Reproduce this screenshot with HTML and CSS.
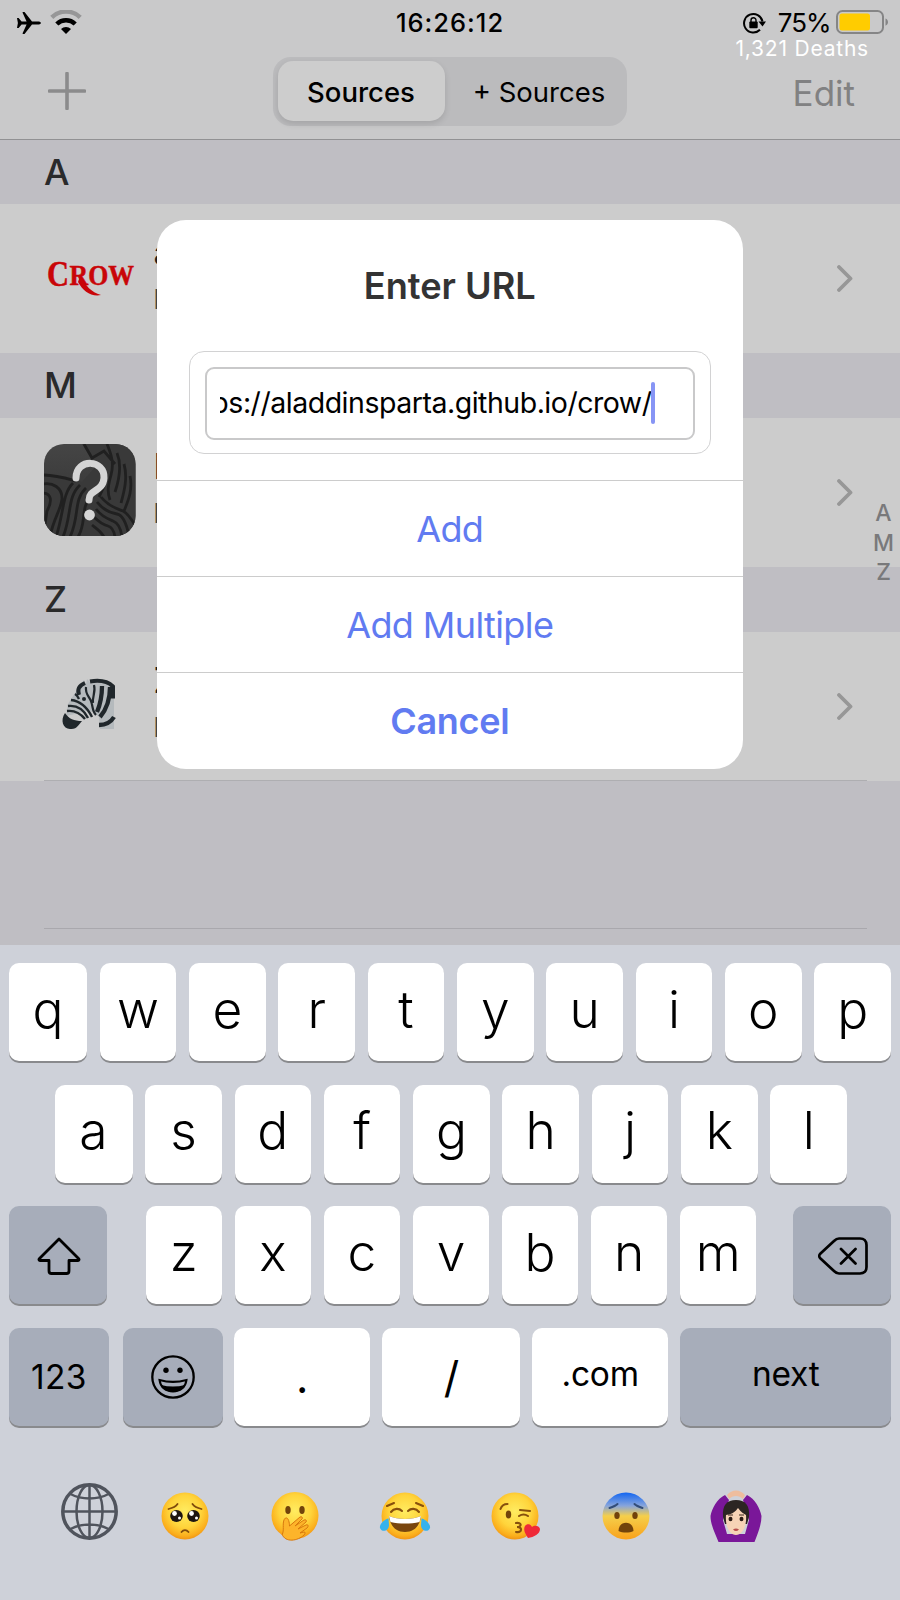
FILE: index.html
```html
<!DOCTYPE html>
<html lang="en">
<head>
<meta charset="utf-8">
<title>Sources</title>
<link rel="stylesheet" href="styles.css">
</head>
<body>
<div class="screen">
  <header class="top">
    <div class="status">
      <div class="status-left">
        <svg class="plane" viewBox="0 0 24 22"><path d="M0 6h1.6l3 3.600h5L5.600.8C5.400.2 5.800 0 6.200 0h1.300l7.500 9.500h6c1.500 0 3 .6 3 1.500s-1.500 1.500-3 1.500h-6L7.500 22H6.200c-.4 0-.8-.2-.6-.8l4-8.800h-5l-3 3.600H0l.9-5z"/></svg>
        <svg class="wifi" viewBox="0 0 32 24"><g fill="none"><path d="M1.800 7.300A20.500 20.500 0 0 1 30.200 7.300" stroke="#979798" stroke-width="4.500"/><path d="M6.800 14A13.300 13.300 0 0 1 25.200 14" stroke="#000" stroke-width="4.500"/></g><path d="M16 24l-5-5a7.200 7.200 0 0 1 10 0z"/></svg>
      </div>
      <div class="time">16:26:12</div>
      <div class="status-right">
        <svg class="rotation" viewBox="0 0 23 22"><path d="M17 17.800A9.300 9.300 0 1 1 19.500 9.500" fill="none" stroke="#000" stroke-width="2"/><path d="M15.500 9.500h7.500l-3.500 5z"/><rect x="6.300" y="9.500" width="8.400" height="6.800" rx="1"/><path d="M8 10V8.200a2.500 2.500 0 0 1 5 0V10" fill="none" stroke="#000" stroke-width="1.400"/></svg>
        <span class="percent">75%</span>
        <svg class="battery" viewBox="0 0 53 24"><rect x="1" y="1" width="46" height="22" rx="5.500" fill="none" stroke="#858586" stroke-width="2"/><rect x="3.500" y="3.500" width="30.500" height="17" rx="2.500" fill="#fc0"/><path d="M49.500 8.500c3.300 1.200 3.300 6 0 7.200z" fill="#858586"/></svg>
      </div>
    </div>
    <div class="overlay-note">1,321 Deaths</div>
    <nav class="navbar">
      <svg class="plus" viewBox="0 0 38 38"><path d="M19 1.500v35M1.500 19h35" stroke="#8b8b8c" stroke-width="3.600" stroke-linecap="round"/></svg>
      <div class="segments"><span class="segment active">Sources</span><span class="segment">+ Sources</span></div>
      <span class="edit">Edit</span>
    </nav>
  </header>

  <main class="list">
    <h2 class="section first">A</h2>
    <div class="row">
      <svg class="thumb" viewBox="0 0 92 92"><g fill="#c90508" stroke="#c90508" stroke-width=".5" font-family="'Liberation Serif',serif" font-weight="bold"><text x="3" y="56" font-size="35" textLength="22" lengthAdjust="spacingAndGlyphs">C</text><text x="25.500" y="55" font-size="29" textLength="64.500" lengthAdjust="spacingAndGlyphs">ROW</text></g><path d="M36 46c6 10 11 16 21 19-10 2-18-4-23-13z" fill="#c90508"/></svg>
      <div class="labels"><b>a</b><span>h</span></div>
      <svg class="chevron" viewBox="0 0 16 27"><path d="M2 2l11.500 11.500L2 25"/></svg>
    </div>
    <h2 class="section">M</h2>
    <div class="row">
      <svg class="thumb" viewBox="0 0 92 92">
        <defs><clipPath id="tile"><rect width="91.500" height="92" rx="20"/></clipPath><linearGradient id="shade" x2="0" y2="1"><stop stop-color="#454545"/><stop offset="1" stop-color="#303030"/></linearGradient></defs>
        <g clip-path="url(#tile)"><rect width="92" height="92" fill="url(#shade)"/>
        <path d="M0 30C16 31 27 35 38 38L52 22 38 0h54v92H0z" fill="#393939"/>
        <g fill="none" stroke="#202020" stroke-width="2.800"><path d="M-1 31c12 0 22 3 33 6M-1 40c10-2 19 4 19 14S9 75 6 93M-2 49c9 0 11 7 5 18L1 80M29 39C18 50 20 69 12 93M36 41C23 53 28 71 19 93M42 44C29 56 36 72 26 93M47 52C36 64 43 78 34 93M40 0l8 14 12-7 11 13M63 0c5 12 7 20 4 31s-4 17-1 25M73 9c5 12 2 27-2 39M80 20c4 14 0 28-3 39M86 32c3 14-2 25-6 35M59 27c6 7 0 18-4 26M53 58c7 9 14 11 20 12s10 12 12 22M52 65c6 8 12 10 17 12s8 8 9 16M50 73c6 6 10 8 14 9s6 5 7 11M48 81c5 4 9 6 12 12M57 53c8 10 17 12 22 14s9 9 13 16"/></g></g>
        <path d="M32 34C32 14 61 15 60 34c-1 14-15 11-15 22" fill="none" stroke="#d5d5d5" stroke-width="7" stroke-linecap="round"/><circle cx="45.500" cy="71" r="5.400" fill="#d5d5d5"/>
      </svg>
      <div class="labels"><b>M</b><span>h</span></div>
      <svg class="chevron" viewBox="0 0 16 27"><path d="M2 2l11.500 11.500L2 25"/></svg>
    </div>
    <h2 class="section">Z</h2>
    <div class="row last">
      <svg class="thumb" viewBox="0 0 92 92">
        <path d="M36 27l4-5 2 4 1-5 4 4 14-1 9 4v43H56l-1-12-5-5-8-1-11 3-9 2 2-12z" fill="#b5babd"/>
        <path d="M21 55c-5 7-2 16 5 16 7 1 9-5 12-8-8 0-13-2-17-8z" fill="#20272b"/>
        <g fill="none" stroke="#20272b" stroke-width="2.400"><path d="M23 53c8-1 14 3 18 8M24 48c9-1 16 4 20 12M27 42c9 1 16 7 21 17M31 36c2 1 3 3 4 5"/><path d="M35 37c-2-6 1-10 6-12" stroke-width="4"/><path d="M46 23.500c9-1.500 18 0 23 5v12" stroke-width="4"/><path d="M42 29c-1 7 3 9 5 14s1 10 5 14M50 27c2 7-2 12-1 18" stroke-width="2.200"/><path d="M58 28c0 11-2 19-5 26M66 29c0 13-4 23-10 30M70 59c-3 5-9 8-15 8" stroke-width="4.300"/></g><circle cx="40" cy="41" r="2" fill="#20272b"/>
      </svg>
      <div class="labels"><b>Z</b><span>h</span></div>
      <svg class="chevron" viewBox="0 0 16 27"><path d="M2 2l11.500 11.500L2 25"/></svg>
    </div>
    <div class="blank"></div>
    <div class="index"><span>A</span><span>M</span><span>Z</span></div>
  </main>

  <section class="keyboard">
    <div class="keys"><div class="key">q</div><div class="key">w</div><div class="key">e</div><div class="key">r</div><div class="key">t</div><div class="key">y</div><div class="key">u</div><div class="key">i</div><div class="key">o</div><div class="key">p</div></div>
    <div class="keys middle"><div class="key">a</div><div class="key">s</div><div class="key">d</div><div class="key">f</div><div class="key">g</div><div class="key">h</div><div class="key">j</div><div class="key">k</div><div class="key">l</div></div>
    <div class="keys spread">
      <div class="key dark side"><svg class="shift" viewBox="0 0 44 38"><path d="M22 2L2.500 21.500c-1 1-.5 2 .5 2h9V34c0 1.500.8 2.500 2.500 2.500h15c1.700 0 2.500-1 2.500-2.500V23.500h9c1 0 1.500-1 .5-2z"/></svg></div>
      <div class="letters"><div class="key">z</div><div class="key">x</div><div class="key">c</div><div class="key">v</div><div class="key">b</div><div class="key">n</div><div class="key">m</div></div>
      <div class="key dark side"><svg class="delete" viewBox="0 0 50 38"><path d="M2.500 16.500L16 4c1.800-1.800 3-2.500 5-2.500h21c4 0 6.500 2.500 6.500 6.500v22c0 4-2.500 6.500-6.500 6.500H21c-2 0-3.200-.7-5-2.500L2.500 21.500c-2-2-2-3 0-5zM23 12l14.500 14.500M37.500 12L23 26.500"/></svg></div>
    </div>
    <div class="keys bottom">
      <div class="key dark word digits">123</div>
      <div class="key dark"><svg class="smile" viewBox="0 0 44 44"><circle cx="22" cy="22" r="20.700" fill="none" stroke="#000" stroke-width="2.300"/><circle cx="15" cy="15.300" r="2.700"/><circle cx="29" cy="15.300" r="2.700"/><path d="M8.500 25c9 2.500 18 2.500 27 0-1 7.500-6.500 11.500-13.500 11.500S9.500 32.500 8.500 25z" fill="none" stroke="#000" stroke-width="2"/><path d="M10 30c8 2 16 2 24 0-2 4-6 7-12 7s-10-3-12-7z"/></svg></div>
      <div class="key symbol">.</div>
      <div class="key symbol">/</div>
      <div class="key word">.com</div>
      <div class="key dark word">next</div>
    </div>
    <div class="emoji-bar">
      <svg width="0" height="0" class="defs"><defs>
        <radialGradient id="face" cy=".4" r=".62"><stop stop-color="#ffec61"/><stop offset=".55" stop-color="#ffd43b"/><stop offset=".85" stop-color="#fbae1c"/><stop offset="1" stop-color="#ee8e13"/></radialGradient>
        <linearGradient id="fear" x2="0" y2="1"><stop stop-color="#1265f1"/><stop offset=".28" stop-color="#86a4dc"/><stop offset=".5" stop-color="#f5cf4b"/><stop offset="1" stop-color="#f9a11b"/></linearGradient>
      </defs></svg>
      <svg class="globe" viewBox="0 0 57 57"><g fill="none" stroke="#50545d" stroke-width="2.500"><circle cx="28.500" cy="28.500" r="26.700" stroke-width="3.500"/><ellipse cx="28.500" cy="28.500" rx="13" ry="26.500"/><path d="M28.500 2v53M2 28.500h53M9.500 11c11 6 27 6 38 0M9.500 46c11-6 27-6 38 0"/></g></svg>
      <svg class="emoji" viewBox="0 0 52 52"><circle cx="26" cy="26" r="23.500" fill="url(#face)"/><g fill="#1d1510"><ellipse cx="17.500" cy="26" rx="6.300" ry="6"/><ellipse cx="34.500" cy="26" rx="6.300" ry="6"/></g><g fill="#fff"><circle cx="15.500" cy="23.500" r="2.400"/><circle cx="20.500" cy="28" r="1.500"/><circle cx="32.500" cy="23.500" r="2.400"/><circle cx="37.500" cy="28" r="1.500"/></g><path d="M9.500 19c4-1 7-2 9-5M42.500 19c-4-1-7-2-9-5M22.500 42c2-2.500 5-2.500 7 0" fill="none" stroke="#804b0b" stroke-width="1.800" stroke-linecap="round"/></svg>
      <svg class="emoji" viewBox="0 0 52 52"><circle cx="26" cy="25.500" r="23.500" fill="url(#face)"/><g fill="#72430b"><ellipse cx="19" cy="20" rx="2.700" ry="4"/><ellipse cx="33" cy="20" rx="2.700" ry="4"/></g><path d="M13.500 44c2-5-1-13 3-16 3-1 4 5 4 8L31 27c2-1 3 1 2 2l-7 7 9-6c2-1 3 1 2 2l-8 7 8-4c2-1 3 1 1 3l-7 5 4-1c2 0 1 2 0 3-6 6-19 8-22-1z" fill="#fdb42a" stroke="#d8780d" stroke-width="1"/></svg>
      <svg class="emoji" viewBox="0 0 52 52"><circle cx="26" cy="26" r="23.500" fill="url(#face)"/><path d="M10 26c9 4 23 4 32 0-1 9-6 16-16 16S11 35 10 26z" fill="#79460e"/><path d="M10 26c9 4 23 4 32 0l-1.500 6c-9 2-20 2-29 0z" fill="#fff"/><path d="M8 16l7-3M44 16l-7-3M12 22c3-4 8-4 11-1M40 22c-3-4-8-4-11-1" fill="none" stroke="#87500d" stroke-width="2.100" stroke-linecap="round"/><path d="M9.500 28.500C6 29 0 34 1 38c2 5 9 3 9-3zM42.500 28.500c3.500.5 9.500 5.500 8.500 9.500-2 5-9 3-9-3z" fill="#36b2ed"/></svg>
      <svg class="emoji" viewBox="0 0 52 52"><circle cx="25" cy="26" r="23.500" fill="url(#face)"/><ellipse cx="18.500" cy="24.500" rx="2.700" ry="4" fill="#72430b"/><path d="M10.500 19c1-3 4-5 7-5M29 26c3-2 6-2 9 0M30 20l10 1M26 33c6-1 6 4 1 4 6 0 5 6-1 5" fill="none" stroke="#87500d" stroke-width="2.100" stroke-linecap="round"/><path d="M38 48c-3-5-5-8-3-12 2-3 6-2 7 1 2-2 7-2 8 2 0 5-6 8-12 9z" fill="#ef2938"/></svg>
      <svg class="emoji" viewBox="0 0 52 52"><circle cx="26" cy="26" r="23.500" fill="url(#fear)"/><g fill="#72430b"><ellipse cx="17" cy="25.500" rx="2.700" ry="3.500"/><ellipse cx="35" cy="25.500" rx="2.700" ry="3.500"/><path d="M18.500 41c0-11 15-11 15 0-4 2-11 2-15 0z"/></g><path d="M9.500 18c3-1 6-2 8-4M42.500 18c-3-1-6-2-8-4" fill="none" stroke="#324d78" stroke-width="2" stroke-linecap="round"/></svg>
      <svg class="emoji" viewBox="0 0 52 52"><path d="M15 5C7 9 2 18 .5 26c0 9 5 18 8 26h36c3-8 7-17 7-26C50 18 45 9 37 5l-4 5 6 20-4 14H17l-4-14 6-20z" fill="#7a1799"/><path d="M17 5c5-6 13-6 18 0l-2 4c-4-4-10-4-14 0z" fill="#eebd9e"/><path d="M13 27C12 15 17 10 26 10s14 5 13 17l-2 7H15z" fill="#2c2523"/><path d="M16 25c7-1 10-4 12-7 3 4 6 6 8 7 1 12-4 20-10 20s-11-8-10-20z" fill="#f7d3b6"/><path d="M17 45h18v7H17z" fill="#7a1799"/><path d="M18 25h5M29 25h5" stroke="#3c2a22" stroke-width="1"/><g fill="#2b1b15"><ellipse cx="20.500" cy="29" rx="2" ry="2.300"/><ellipse cx="31.500" cy="29" rx="2" ry="2.300"/></g><path d="M23 39.500q3-2 6 0-3 3-6 0z" fill="#b94f4d"/></svg>
    </div>
  </section>

  <div class="dialog">
    <h1 class="dialog-title">Enter URL</h1>
    <div class="field-frame"><div class="field"><span class="value">https://aladdinsparta.github.io/crow/</span><i class="caret"></i></div></div>
    <div class="action">Add</div>
    <div class="action">Add Multiple</div>
    <div class="action strong">Cancel</div>
  </div>
</div>
</body>
</html>
```
FILE: styles.css
```css
* { box-sizing: border-box; }
body { margin: 0; font-family: Inter, "Liberation Sans", sans-serif; color: #000; }
svg { display: block; flex: none; }
.screen { position: relative; width: 900px; height: 1600px; overflow: hidden; display: flex; flex-direction: column; }

.top { position: relative; height: 140px; background: #c9c9ca; border-bottom: 1px solid #919193; }
.status { height: 46px; display: grid; grid-template-columns: 1fr auto 1fr; align-items: center; padding: 0 11px 0 17px; }
.status-left { display: flex; align-items: center; gap: 9px; margin-top: -3px; }
.plane { width: 24px; height: 22px; margin-top: 3px; }
.wifi { width: 32px; height: 24px; }
.time { font-size: 25.500px; font-weight: 550; line-height: 46px; letter-spacing: 1px; margin-left: -6px; }
.status-right { display: flex; align-items: center; justify-content: flex-end; }
.rotation { width: 23px; height: 22px; margin-right: 12px; }
.percent { font-size: 26px; line-height: 46px; letter-spacing: -1px; margin-right: 5.500px; }
.battery { width: 53px; height: 24px; margin-top: -2px; }
.overlay-note { position: absolute; right: 31px; top: 35px; font-size: 21px; line-height: 28px; letter-spacing: 0.800px; color: #fff; }
.navbar { height: 93px; display: grid; grid-template-columns: 1fr 354px 1fr; align-items: start; padding: 0 45px 0 48px; }
.plus { width: 38px; height: 38px; margin-top: 26px; }
.segments { display: flex; height: 69px; margin: 11px 2px 0 -2px; padding: 4px 5px 5px; border-radius: 18px; background: #bbbbbd; }
.segment { flex: 1; display: flex; align-items: center; justify-content: center; font-size: 27.500px; padding: 2px 0 0 12px; white-space: nowrap; }
.segment.active { flex: 0 0 167px; background: #cdcdcd; border-radius: 15px; font-weight: 550; padding: 2px 0 0; box-shadow: 0 3px 6px rgba(0,0,0,.12); }
.edit { justify-self: end; margin-top: 22.500px; font-size: 35px; line-height: 48px; color: #818182; }

.list { position: relative; height: 805px; background: #bfbec3; }
.section { margin: 0; height: 65px; padding-left: 44px; font-size: 36px; line-height: 65px; font-weight: 550; color: #2a2a2b; }
.section.first { height: 64px; }
.row { height: 149px; background: #ccc; display: flex; align-items: flex-start; padding: 26px 47px 0 43.500px; }
.row.last { position: relative; }
.row.last::after { content: ""; position: absolute; left: 44px; right: 33px; bottom: 0; height: 1px; background: #aeaeb1; }
.thumb { width: 92px; height: 92px; }
.labels { margin-left: 18px; display: flex; flex-direction: column; }
.labels b { font-size: 35px; line-height: 44px; font-weight: 500; color: #1c1c1c; }
.labels span { font-size: 27px; line-height: 40px; margin-top: 6px; color: #444; }
.chevron { width: 16px; height: 27px; margin: 35px 0 0 auto; fill: none; stroke: #979797; stroke-width: 3.800px; stroke-linecap: round; stroke-linejoin: round; }
.blank { height: 148px; margin: 0 33px 0 44px; border-bottom: 1px solid #a9a8ad; }
.index { position: absolute; right: 0; top: 359px; width: 33px; display: flex; flex-direction: column; align-items: center; font-size: 23px; line-height: 29.600px; font-weight: 500; color: #79797b; }

.keyboard { flex: 1; background: #ced1d9; padding: 18px 9px 0; font-size: 51.500px; font-weight: 350; }
.keys { display: grid; grid-template-columns: 78px repeat(9, 1fr); gap: 12.700px; height: 99px; margin-bottom: 22.700px; }
.keys.middle { grid-template-columns: 78px repeat(8, 1fr); padding: 0 44px 0 45.500px; }
.keys.spread { display: flex; justify-content: space-between; gap: 0; }
.letters { display: grid; grid-template-columns: repeat(7, 76.400px); gap: 12.700px; margin-left: 2px; }
.key { background: #fff; border-radius: 10px; box-shadow: 0 2px 0 #898a8d; height: 98px; display: flex; align-items: center; justify-content: center; padding-bottom: 7px; }
.dark { background: #a7adba; }
.side { width: 97.500px; }
.shift { width: 44px; height: 38px; margin: 9px 0 0 3px; fill: none; stroke: #000; stroke-width: 2.800px; stroke-linejoin: round; }
.delete { width: 50px; height: 38px; margin: 9px 0 0 1px; fill: none; stroke: #000; stroke-width: 2.700px; stroke-linecap: round; stroke-linejoin: round; }
.smile { width: 44px; height: 44px; margin-top: 7px; }
.word { font-size: 33.500px; padding-bottom: 6px; font-weight: 380; letter-spacing: -0.200px; }
.digits { padding-bottom: 1px; letter-spacing: 0.400px; }
.keys.bottom { grid-template-columns: 100px 100px 136px 138px 136px 210.500px; column-gap: 0; justify-content: space-between; }
.bottom .key:nth-child(2) { margin: 0 -1.500px 0 1.500px; }
.bottom .key:nth-child(3), .bottom .key:nth-child(4) { margin: 0 -.5px 0 .5px; }
.symbol { font-size: 43px; padding-bottom: 0; font-weight: 400; }
.emoji-bar { display: flex; align-items: flex-start; padding: 33px 0 0 52px; }
.defs { position: absolute; }
.globe { width: 57px; height: 57px; margin-right: 41px; }
.emoji { width: 52px; height: 52px; margin: 7px 58.200px 0 0; }

.dialog { position: absolute; left: 156.500px; top: 220px; width: 586.500px; height: 548.500px; border-radius: 29px; background: #fff; display: flex; flex-direction: column; overflow: hidden; }
.dialog-title { margin: 0; padding-top: 42px; height: 130.500px; font-size: 36.200px; line-height: 48px; font-weight: 580; color: #333; text-align: center; }
.field-frame { width: 522px; height: 103px; margin: 0 0 26px 32px; border: 1px solid #d2d2d3; border-radius: 15px; padding: 15px; }
.field { height: 73px; border: 2px solid #c9c9ca; border-radius: 9px; display: flex; align-items: center; justify-content: flex-end; padding: 0 38px 0 0; overflow: hidden; }
.value { width: 432px; overflow: hidden; display: flex; justify-content: flex-end; white-space: nowrap; font-size: 28.500px; line-height: 42px; letter-spacing: -0.480px; }
.caret { width: 4px; height: 42px; border-radius: 2px; background: #8795f5; margin-left: -1px; flex: none; }
.action { height: 96.200px; flex: none; border-top: 1px solid #ccc; display: flex; align-items: center; justify-content: center; font-size: 36px; letter-spacing: -0.600px; color: #617bf1; padding-top: 1px; }
.action.strong { font-weight: 600; letter-spacing: -0.300px; }
```
